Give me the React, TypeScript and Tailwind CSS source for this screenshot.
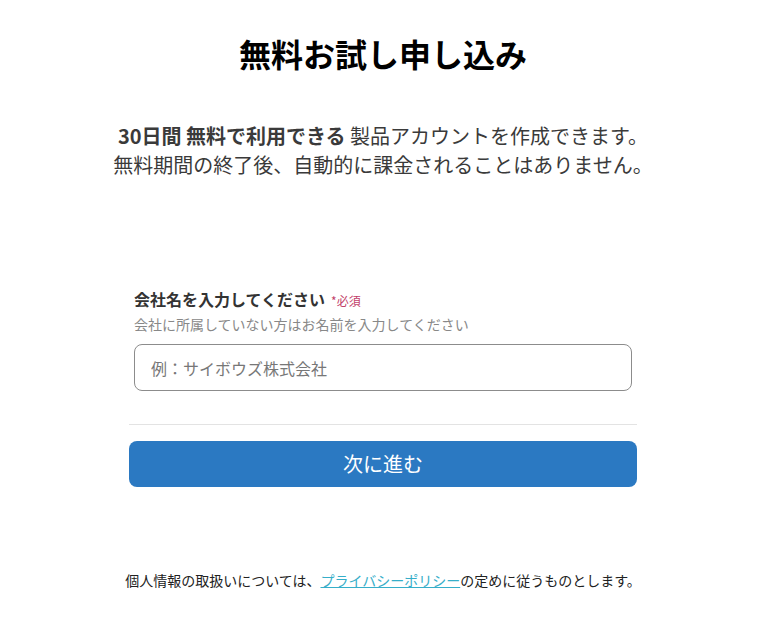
import React, { useState } from 'react';

const font = { fontFamily: '"Noto Sans CJK JP", "Noto Sans", sans-serif' };

export default function App(): JSX.Element {
    const [company, setCompany] = useState('');
    return (
        <div className="min-h-screen w-full bg-white text-[#333]" style={font}>
            <div className="mx-auto w-[508px] pt-[31px]">
                <h1 className="text-center text-[32px] font-bold leading-[45px] text-black">
                    無料お試し申し込み
                </h1>
                <p className="mt-[45px] -mx-[20px] text-center text-[20px] leading-[29px] text-[#3a3a3a]">
                    <b>30日間 無料で利用できる</b> 製品アカウントを作成できます。
                    <br />
                    無料期間の終了後、自動的に課金されることはありません。
                </p>
                <form
                    className="mt-[108px]"
                    onSubmit={(e) => e.preventDefault()}
                >
                    <div className="px-[5px]">
                        <label className="flex items-baseline gap-[6px] text-[16px] font-bold leading-[24px]">
                            会社名を入力してください
                            <span className="text-[12px] font-normal text-[#c2416a]">*必須</span>
                        </label>
                        <div className="mt-[1px] text-[14px] leading-[20px] text-[#888]">
                            会社に所属していない方はお名前を入力してください
                        </div>
                        <input
                            className="mt-[10px] h-[47px] w-full rounded-[8px] border border-[#8c8c8c] px-[16px] text-[16px] text-[#333] outline-none placeholder:text-[#777]"
                            placeholder="例：サイボウズ株式会社"
                            value={company}
                            onChange={(e) => setCompany(e.target.value)}
                        />
                    </div>
                    <div className="mt-[33px] border-t border-[#e3e3e3]" />
                    <button
                        type="submit"
                        className="mt-[16px] h-[46px] w-full rounded-[8px] bg-[#2b79c2] text-[20px] text-white"
                    >
                        次に進む
                    </button>
                </form>
                <p className="mt-[83px] -mx-[20px] text-center text-[14px] leading-[20px] text-[#222]">
                    個人情報の取扱いについては、
                    <a href="#" className="text-[#36aec9] underline">
                        プライバシーポリシー
                    </a>
                    の定めに従うものとします。
                </p>
            </div>
        </div>
    );
}
